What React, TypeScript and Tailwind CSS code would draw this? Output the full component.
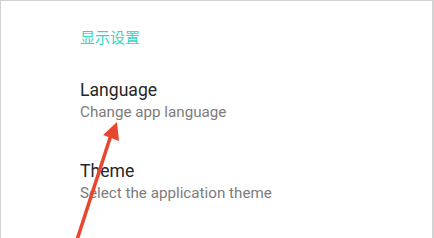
export default function App() {
  return (
    <div className="relative w-[434px] h-[238px] overflow-hidden bg-white border-t border-l border-r-2 border-[#d2d2d2] font-['Roboto',sans-serif]">
      <div className="pl-[79px] pt-[26px]">
        <div className="text-[15px] leading-[20px] text-[#38d4c4] font-['Noto_Sans_CJK_SC',sans-serif]">显示设置</div>

        <div className="mt-[31px] flex flex-col gap-[37px]">
          <div>
            <div className="text-[17.6px] leading-[24px] text-[#262626]">Language</div>
            <div className="text-[15.2px] leading-[20px] text-[#7c7c7c]">Change app language</div>
          </div>
          <div>
            <div className="text-[17.6px] leading-[24px] text-[#262626]">Theme</div>
            <div className="text-[15.2px] leading-[20px] text-[#7c7c7c]">Select the application theme</div>
          </div>
        </div>
      </div>

      {/* annotation arrow */}
      <svg className="absolute left-0 top-0 pointer-events-none" width="434" height="238" viewBox="0 0 434 238">
        <line x1="75" y1="242" x2="110" y2="134" stroke="#e8462e" strokeWidth="3.5" strokeLinecap="round" />
        <polygon points="116,121 102,134 118,140" fill="#e8462e" />
      </svg>
    </div>
  )
}
